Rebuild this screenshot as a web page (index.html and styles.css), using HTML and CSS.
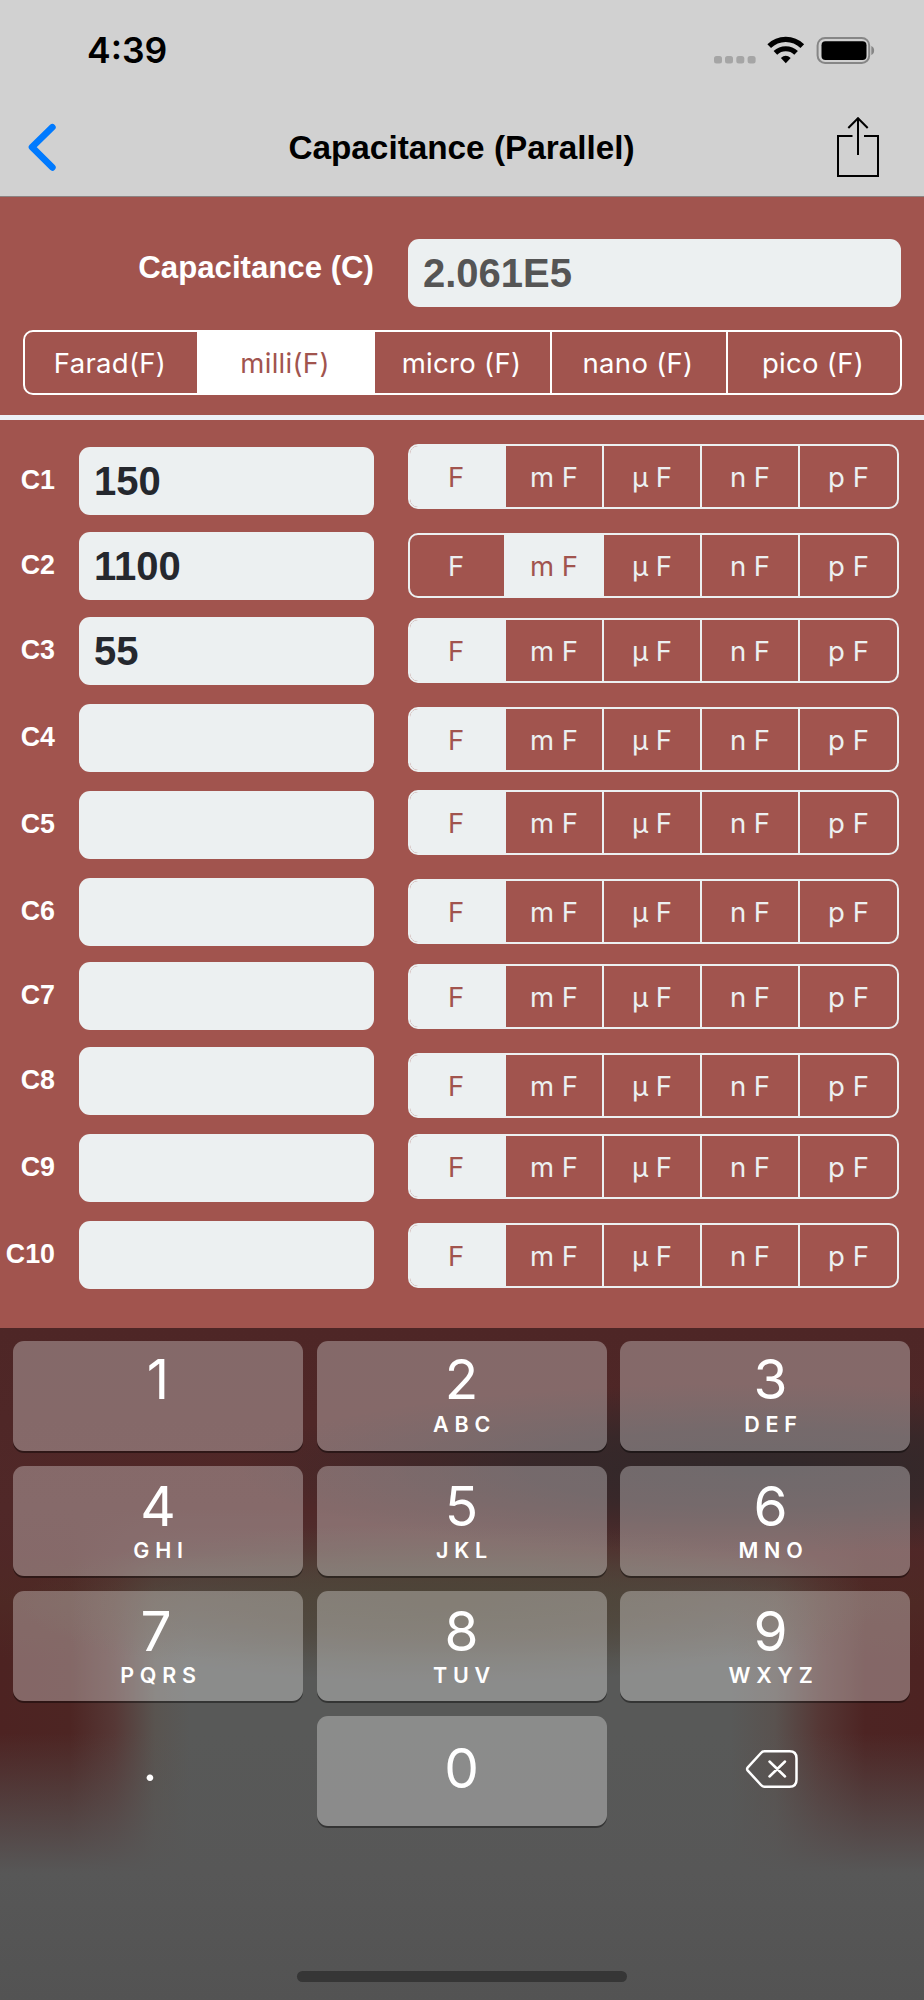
FILE: index.html
```html
<!DOCTYPE html>
<html lang="en">
<head>
<meta charset="utf-8">
<title>Capacitance (Parallel)</title>
<link rel="stylesheet" href="styles.css">
</head>
<body>
<div class="screen">
  <header class="header">
    <div class="status">
      <span class="time">4:39</span>
      <svg class="status-icons" width="164" height="30" viewBox="0 0 164 30">
        <g fill="#a5a5a5">
          <rect x="1" y="20" width="8" height="7.5" rx="2.5"/>
          <rect x="12" y="20" width="8" height="7.5" rx="2.5"/>
          <rect x="23.3" y="20" width="8" height="7.5" rx="2.5"/>
          <rect x="34.6" y="20" width="8" height="7.5" rx="2.5"/>
        </g>
        <g fill="none" stroke="#000">
          <path d="M56.2 10.200A23.6 23.6 0 0 1 89.3 10.200" stroke-width="5.2"/>
          <path d="M62.4 16.900A15 15 0 0 1 83.1 16.900" stroke-width="5.2"/>
        </g>
        <path d="M67.9 21.900Q72.7 17.800 77.7 21.900L72.8 27.200Z"/>
        <rect x="104.6" y="1.900" width="51.6" height="25" rx="7.5" fill="none" stroke="#868686" stroke-width="2"/>
        <rect x="108.500" y="5.300" width="45" height="18.6" rx="4"/>
        <path d="M158.3 10c3.8 1.4 3.8 7.600 0 9z" fill="#868686"/>
      </svg>
    </div>
    <nav class="nav">
      <svg class="back" width="36" height="52" viewBox="0 0 36 52"><path d="M28.400 6.200L8 26.200L28.400 46.400" fill="none" stroke="#007aff" stroke-width="6.600" stroke-linecap="round" stroke-linejoin="round"/></svg>
      <h1 class="title">Capacitance (Parallel)</h1>
      <svg class="share" width="44" height="62" viewBox="0 0 44 62"><path d="M16.500 20H2V60H42V20H28M22 39V3M12.300 12L22 2.200L31.700 12" fill="none" stroke="#000" stroke-width="2"/></svg>
    </nav>
  </header>

  <main class="form">
    <section class="result">
      <span class="result-label">Capacitance (C)</span>
      <span class="field result-value">2.061E5</span>
    </section>
    <div class="segment segment-main"><span>Farad(F)</span><span class="on">milli(F)</span><span>micro (F)</span><span>nano (F)</span><span>pico (F)</span></div>
    <div class="rule"></div>
    <section class="rows">
      <div class="row r1"><b class="name">C1</b><span class="field">150</span><div class="segment"><span class="on">F</span><span>m F</span><span>µ F</span><span>n F</span><span>p F</span></div></div>
      <div class="row r2"><b class="name">C2</b><span class="field">1100</span><div class="segment"><span>F</span><span class="on">m F</span><span>µ F</span><span>n F</span><span>p F</span></div></div>
      <div class="row r3"><b class="name">C3</b><span class="field">55</span><div class="segment"><span class="on">F</span><span>m F</span><span>µ F</span><span>n F</span><span>p F</span></div></div>
      <div class="row r4"><b class="name">C4</b><span class="field"></span><div class="segment"><span class="on">F</span><span>m F</span><span>µ F</span><span>n F</span><span>p F</span></div></div>
      <div class="row r5"><b class="name">C5</b><span class="field"></span><div class="segment"><span class="on">F</span><span>m F</span><span>µ F</span><span>n F</span><span>p F</span></div></div>
      <div class="row r6"><b class="name">C6</b><span class="field"></span><div class="segment"><span class="on">F</span><span>m F</span><span>µ F</span><span>n F</span><span>p F</span></div></div>
      <div class="row r7"><b class="name">C7</b><span class="field"></span><div class="segment"><span class="on">F</span><span>m F</span><span>µ F</span><span>n F</span><span>p F</span></div></div>
      <div class="row r8"><b class="name">C8</b><span class="field"></span><div class="segment"><span class="on">F</span><span>m F</span><span>µ F</span><span>n F</span><span>p F</span></div></div>
      <div class="row r9"><b class="name">C9</b><span class="field"></span><div class="segment"><span class="on">F</span><span>m F</span><span>µ F</span><span>n F</span><span>p F</span></div></div>
      <div class="row r10"><b class="name">C10</b><span class="field"></span><div class="segment"><span class="on">F</span><span>m F</span><span>µ F</span><span>n F</span><span>p F</span></div></div>
    </section>
  </main>

  <footer class="keyboard">
    <div class="keys">
      <div class="key top"><span class="digit">1</span></div>
      <div class="key top"><span class="digit">2</span><span class="letters">ABC</span></div>
      <div class="key top right"><span class="digit">3</span><span class="letters">DEF</span></div>
      <div class="key"><span class="digit">4</span><span class="letters">GHI</span></div>
      <div class="key"><span class="digit">5</span><span class="letters">JKL</span></div>
      <div class="key right"><span class="digit">6</span><span class="letters">MNO</span></div>
      <div class="key"><span class="digit seven">7</span><span class="letters">PQRS</span></div>
      <div class="key"><span class="digit">8</span><span class="letters">TUV</span></div>
      <div class="key right"><span class="digit">9</span><span class="letters">WXYZ</span></div>
      <div class="key plain point"><span class="digit">.</span></div>
      <div class="key zero"><span class="digit">0</span></div>
      <div class="key plain delete">
        <svg width="54" height="40" viewBox="0 0 54 40"><path d="M19.500 2.300H44.500Q51.500 2.300 51.500 9.300V30.700Q51.500 37.700 44.500 37.700H19.500Q17.500 37.700 16 36L2.800 21.600Q1.400 20 2.800 18.400L16 4Q17.500 2.300 19.500 2.300ZM24.500 12.500L40 27.500M40 12.500L24.500 27.500" fill="none" stroke="#fff" stroke-width="2.500" stroke-linecap="round" stroke-linejoin="round"/></svg>
      </div>
    </div>
    <div class="home-bar"></div>
  </footer>
</div>
</body>
</html>
```

FILE: styles.css
```css
* { box-sizing: border-box; }
body { margin: 0; }
.screen {
  width: 924px;
  height: 2000px;
  display: flex;
  flex-direction: column;
  overflow: hidden;
  background: #a1544e;
  font-family: Inter, "Liberation Sans", sans-serif;
}

/* Header */
.header { height: 197px; background: #d1d1d1; border-bottom: 1px solid #8c8382; }
.status {
  height: 101px;
  padding: 0 47px 0 87px;
  display: flex;
  align-items: center;
  justify-content: space-between;
}
.time { font-size: 35.5px; font-weight: 600; line-height: 42px; }
.nav {
  height: 93px;
  padding: 0 44px 0 24px;
  display: grid;
  grid-template-columns: 44px 1fr 44px;
  align-items: center;
}
.back { margin-top: -1px; }
.title {
  margin: 0;
  padding-left: 19px;
  text-align: center;
  font: 700 33.3px/40px "Liberation Sans", sans-serif;
}
.share { justify-self: end; margin-top: -2px; }

/* Result */
.form { height: 1131px; }
.result {
  padding: 42px 23px 0 0;
  display: grid;
  grid-template-columns: 374px 493px;
  column-gap: 34px;
}
.result-label {
  text-align: right;
  color: #fff;
  font: 700 31.2px/58px "Liberation Sans", sans-serif;
}
.field {
  height: 68px;
  padding-left: 15px;
  border-radius: 11px;
  background: #ecf0f1;
  color: #25282e;
  font: 700 40px/68px "Liberation Sans", sans-serif;
}
.result-value { color: #555; }

/* Segmented controls */
.segment {
  height: 65px;
  display: grid;
  grid-template-columns: 94px 98px 98px 98px 1fr;
  border: 2px solid #ecf0f1;
  border-radius: 10px;
  overflow: hidden;
  color: #ecf0f1;
  font-size: 27.5px;
  font-weight: 400;
  line-height: 62px;
  text-align: center;
}
.segment span + span { border-left: 2px solid #ecf0f1; }
.segment span:first-child { padding-right: 2px; }
.segment .on { background: #ecf0f1; color: #a1544e; }
.segment-main {
  width: 879px;
  margin: 23px 0 0 23px;
  grid-template-columns: 172px 176px 177px 176px 1fr;
  border-color: #fff;
  color: #fff;
  letter-spacing: 0.3px;
}
.segment-main span { padding-right: 2px; }
.segment-main span + span { border-color: #fff; }
.segment-main .on { background: #fff; }
.rule { height: 5px; margin-top: 20px; background: #ecf0f6; }

/* Capacitor rows */
.rows { padding-top: 20px; }
.row {
  height: 87px;
  padding-top: 7px;
  display: grid;
  grid-template-columns: 79px 329px 491px;
  align-items: start;
}
.row .field { width: 295px; }
.name {
  padding-right: 24px;
  text-align: right;
  color: #fff;
  font: 700 26.800px/66px "Liberation Sans", sans-serif;
}
.r1, .r2, .r7 { height: 85px; }
.r6 { height: 84px; }
.r1 .segment { margin-top: -3px; }
.r2 .segment, .r3 .segment, .r6 .segment { margin-top: 1px; }
.r4 .segment { margin-top: 3px; }
.r5 .segment { margin-top: -1px; }
.r7 .segment, .r10 .segment { margin-top: 2px; }
.r8 .segment { margin-top: 6px; }

/* Keyboard */
.keyboard {
  height: 672px;
  padding: 13px 14px 0 13px;
  background:
    radial-gradient(ellipse 520px 85px at 760px 140px, #30282a 0, rgba(48,40,42,.75) 45%, rgba(48,40,42,0) 100%),
    radial-gradient(ellipse 430px 80px at 450px 275px, rgba(76,68,54,.9) 0, rgba(76,68,54,.6) 45%, rgba(76,68,54,0) 100%),
    linear-gradient(#4e2626 0, #502828 180px, rgba(80,40,40,.85) 225px, rgba(80,50,40,.4) 270px, rgba(80,80,70,0) 330px, rgba(87,87,87,0) 405px, rgba(87,87,87,.5) 475px, #575757 545px, #535353 100%),
    linear-gradient(90deg, #4d2322 0, #4d2523 70px, #563836 115px, #595450 155px, #585958 190px, #585958 730px, #59524f 775px, #553735 820px, #4d2423 865px, #4d2322 100%);
}
.keys {
  display: grid;
  grid-template-columns: repeat(3, 290px);
  grid-auto-rows: 110px;
  gap: 15px 13.500px;
}
.key {
  padding-top: 7px;
  display: flex;
  flex-direction: column;
  align-items: center;
  border-radius: 11px;
  background: rgba(255,255,255,.31);
  box-shadow: 0 2px 0 rgba(0,0,0,.4);
  color: #fff;
}
.digit { height: 66px; font-size: 55px; font-weight: 400; line-height: 66px; }
.seven { margin-right: 4px; }
.letters {
  height: 26px;
  margin-top: -2px;
  padding-left: 6px;
  font-size: 21.500px;
  font-weight: 600;
  line-height: 26px;
  letter-spacing: 5.8px;
}
.top { padding-top: 5px; }
.top .letters { margin-top: -1px; }
.right { padding-left: 11px; }
.zero { padding-top: 19px; }
.plain { background: none; box-shadow: none; }
.point { padding: 14px 16px 0 0; }
.point .digit { font-size: 50px; }
.delete { justify-content: center; padding: 0 0 5px 14px; }
.home-bar { width: 330px; height: 11px; margin: 145px auto 0; border-radius: 6px; background: #363636; }
```
